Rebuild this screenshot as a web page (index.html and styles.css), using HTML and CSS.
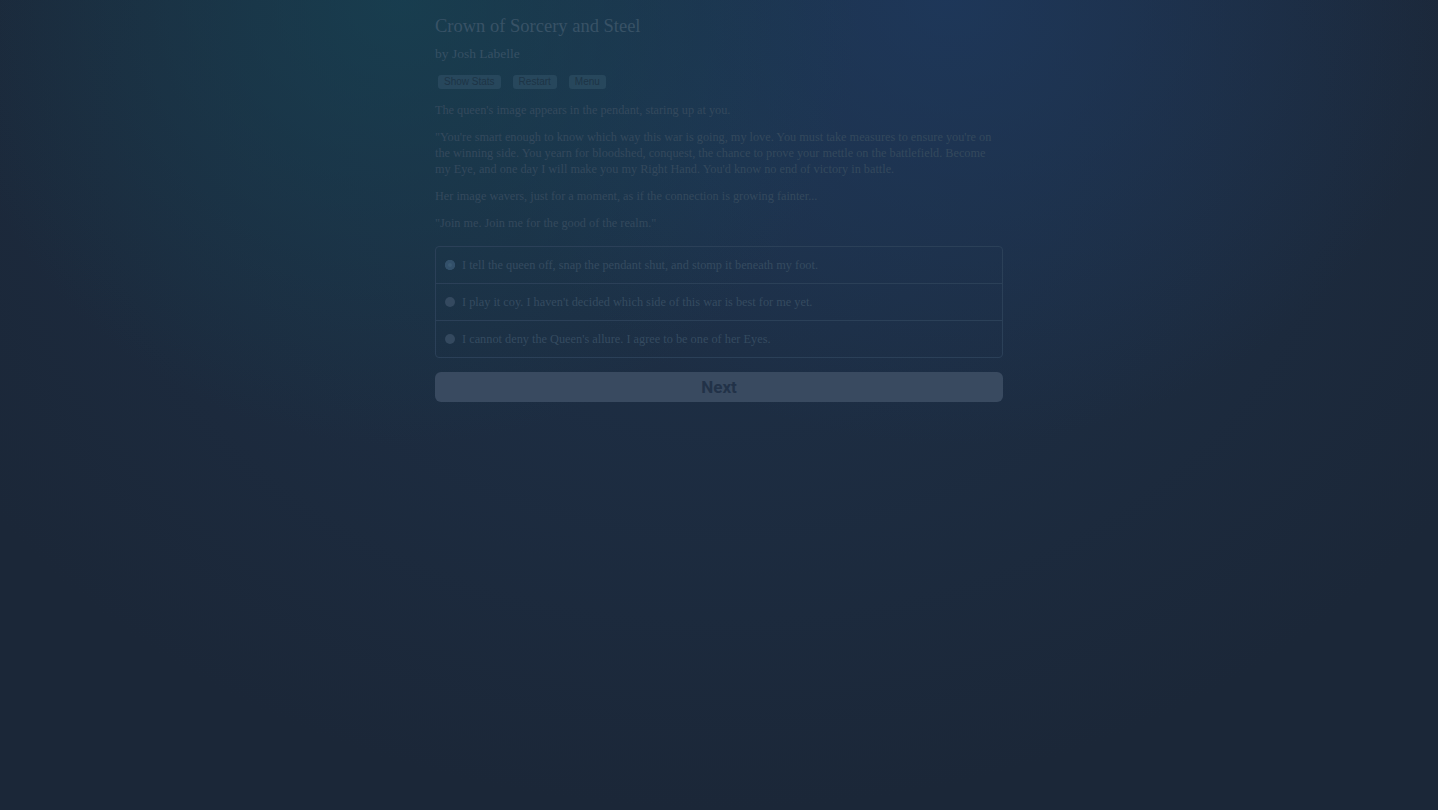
FILE: index.html
```html
<!DOCTYPE html>
<html lang="en">
<head>
    <meta charset="UTF-8">
    <meta name="viewport" content="width=device-width, initial-scale=1.0">
    <title>Crown of Sorcery and Steel</title>
    <link rel="stylesheet" href="styles.css">
</head>
<body>
    <div class="container">
        <h1 class="title">Crown of Sorcery and Steel</h1>
        <p class="author">by Josh Labelle</p>
        <div class="buttons">
            <button class="small-btn">Show Stats</button>
            <button class="small-btn">Restart</button>
            <button class="small-btn">Menu</button>
        </div>
        <div class="story">
            <p>The queen's image appears in the pendant, staring up at you.</p>
            <p>"You're smart enough to know which way this war is going, my love. You must take measures to ensure you're on the winning side. You yearn for bloodshed, conquest, the chance to prove your mettle on the battlefield. Become my Eye, and one day I will make you my Right Hand. You'd know no end of victory in battle.</p>
            <p>Her image wavers, just for a moment, as if the connection is growing fainter...</p>
            <p>"Join me. Join me for the good of the realm."</p>
        </div>
        <form class="choices">
            <label class="choice">
                <span class="radio selected"></span>
                I tell the queen off, snap the pendant shut, and stomp it beneath my foot.
            </label>
            <label class="choice">
                <span class="radio"></span>
                I play it coy. I haven't decided which side of this war is best for me yet.
            </label>
            <label class="choice">
                <span class="radio"></span>
                I cannot deny the Queen's allure. I agree to be one of her Eyes.
            </label>
        </form>
        <button class="next-btn">Next</button>
    </div>
</body>
</html>
```

FILE: styles.css
```css
html, body {
    height: 100%;
}
body {
    margin: 0;
    font-family: "Liberation Serif", "DejaVu Serif", serif;
    color: #34495d;
    background:
        radial-gradient(ellipse 32% 55% at 28% 0%, rgba(22, 68, 84, 0.7), rgba(22, 68, 84, 0)),
        radial-gradient(ellipse 35% 55% at 66% 0%, rgba(30, 58, 96, 0.75), rgba(30, 58, 96, 0)),
        radial-gradient(ellipse 60% 80% at 50% 20%, #1e3149, #1b2738);
    background-color: #1b2738;
}
.container {
    width: 568px;
    margin: 0 auto;
    padding-top: 14px;
}
.title {
    font-size: 18.5px;
    font-weight: normal;
    color: #385266;
    margin: 0 0 7px;
    line-height: 24px;
}
.author {
    font-size: 13.5px;
    margin: 0 0 12px;
    line-height: 18px;
    color: #37506380;
    color: #365064;
}
.buttons {
    display: flex;
    gap: 12px;
    padding-left: 3px;
    margin-bottom: 13px;
}
.small-btn {
    font-family: "Liberation Sans", Arial, sans-serif;
    font-size: 10px;
    color: #1d3446;
    background-color: #27475c;
    border: none;
    border-radius: 3px;
    padding: 1px 6px;
    height: 14px;
    line-height: 12px;
}
.story p {
    font-size: 12.25px;
    line-height: 16px;
    margin: 0 0 11px;
}
.choices {
    margin-top: 15px;
    border: 1px solid #2b4058;
    border-radius: 4px;
}
.choice {
    display: flex;
    align-items: center;
    gap: 7px;
    height: 36px;
    padding-left: 9px;
    font-size: 12.3px;
    color: #354b60;
    border-top: 1px solid #2b4058;
}
.choice:first-child {
    border-top: none;
}
.radio {
    width: 10px;
    height: 10px;
    border-radius: 50%;
    background-color: #34495f;
    flex-shrink: 0;
}
.radio.selected {
    background-color: #3b5a72;
    box-shadow: inset 0 0 0 3px #33506a;
}
.next-btn {
    display: block;
    width: 100%;
    height: 30px;
    margin-top: 14px;
    border: none;
    border-radius: 6px;
    background-color: #394a60;
    color: #223248;
    font-family: Roboto, "Liberation Sans", sans-serif;
    font-weight: bold;
    font-size: 17px;
}
```
